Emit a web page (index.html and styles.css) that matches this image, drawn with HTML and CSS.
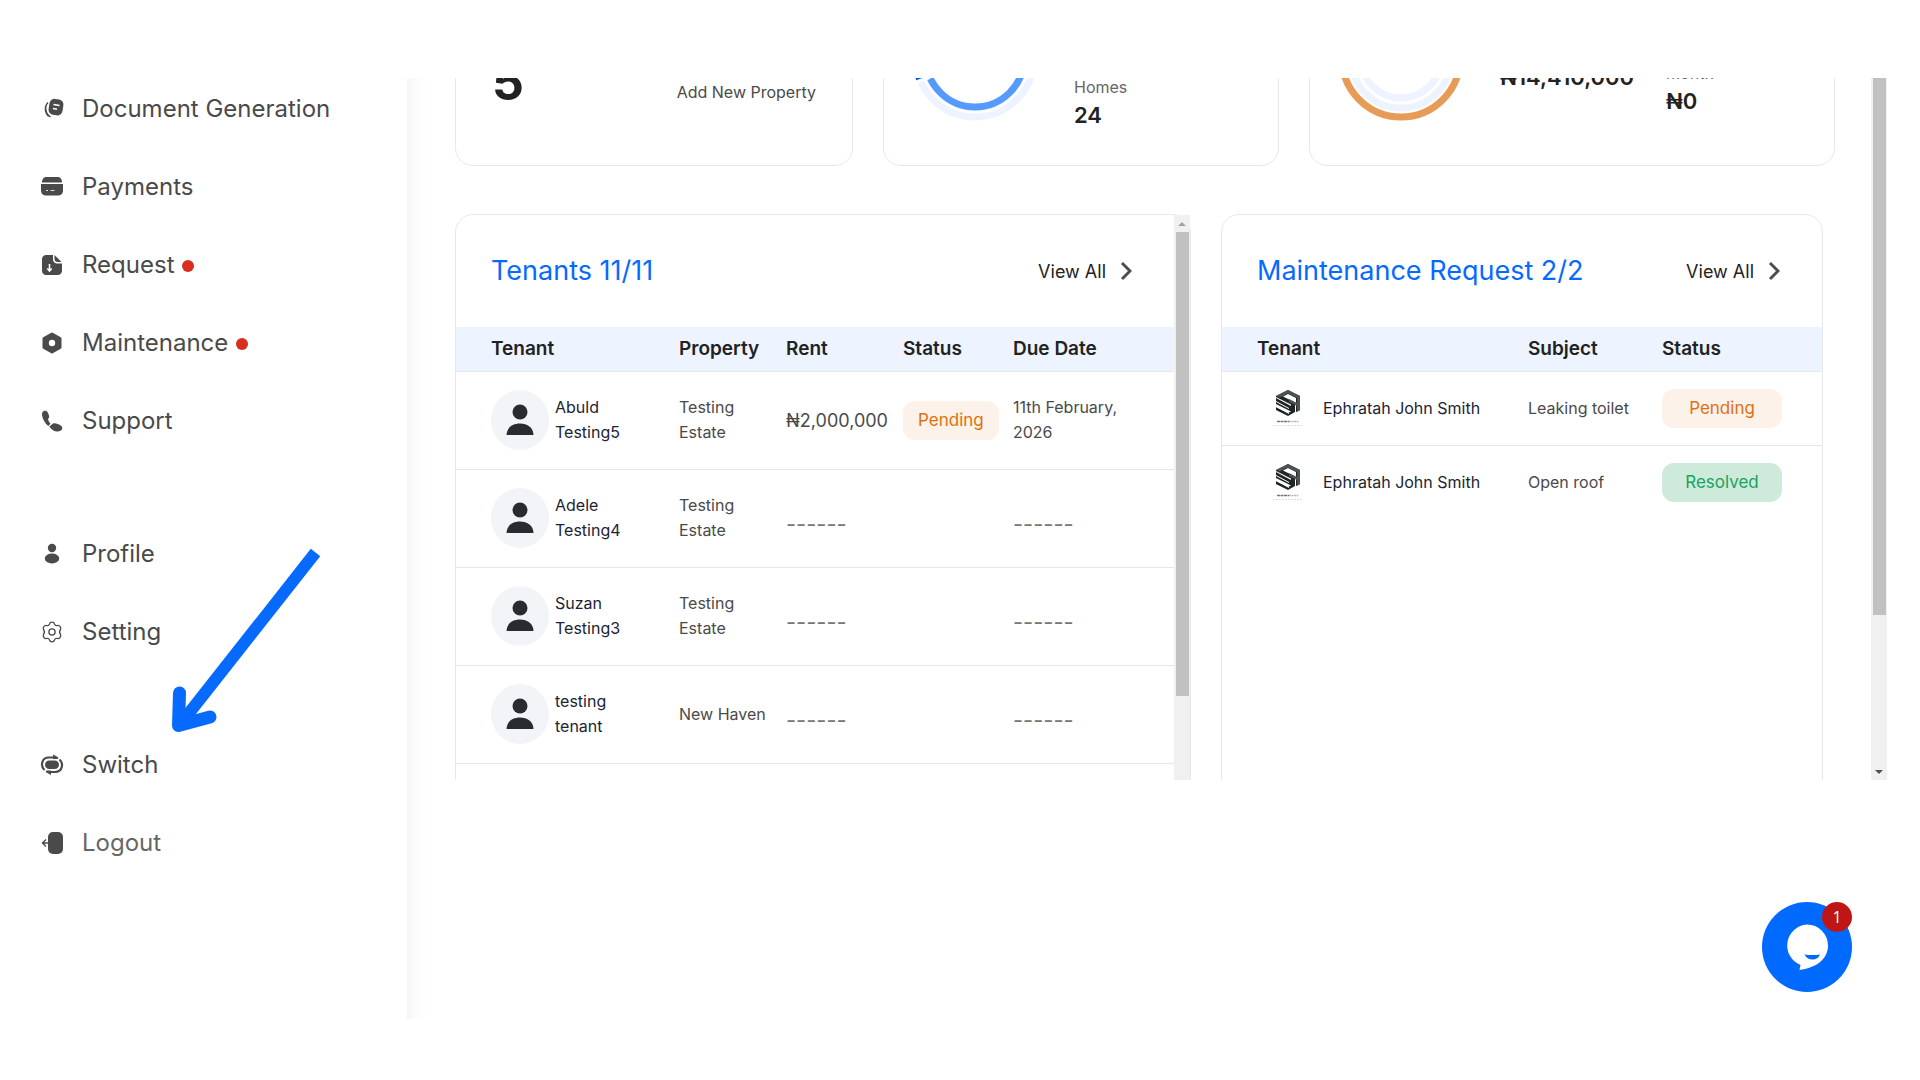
FILE: index.html
```html
<!DOCTYPE html>
<html lang="en">
<head>
<meta charset="utf-8">
<meta name="viewport" content="width=device-width, initial-scale=1">
<title>Property Dashboard</title>
<link rel="stylesheet" href="styles.css">
</head>
<body>
<svg class="defs" aria-hidden="true">
  <symbol id="person" viewBox="0 0 28 32">
    <circle cx="14" cy="8" r="7.5"/>
    <path d="M.5 31C.8 23.500 6.500 19.500 14 19.500S27.200 23.500 27.500 31z"/>
  </symbol>
  <symbol id="chevron" viewBox="0 0 12 20">
    <path d="M2 2l8 8-8 8" fill="none" stroke="#4d4d4d" stroke-width="3"/>
  </symbol>
  <symbol id="logo" viewBox="0 0 32 38">
    <path d="M4 7L16 1l12 6v14l-4 2V9l-8-4-5 2.500 12 6V23L16 27 4 21v-3l12 6 3-1.500L4 15V9l15 8v-1.500L4 8z" fill="#1f2426"/>
    <path d="M4 7L16 1l12 6v14l-3 2v-6l-8-4v-3l8 4V9l-9-4.500-8 4z" fill="#4d5355"/>
    <path d="M4 12.500l13 7M4 17.500l13 7" stroke="#fff" stroke-width="1"/>
    <path d="M5 32.500h12" stroke="#777" stroke-width="1.500" stroke-dasharray="3 .5"/>
    <path d="M17 32.500h10" stroke="#bbb" stroke-width="1.500" stroke-dasharray="2 .5"/>
    <path d="M1 36.500h30" stroke="#ddd" stroke-dasharray="2 1"/>
  </symbol>
</svg>

<div class="page">
  <aside class="sidebar">
    <nav class="nav" aria-label="Main">
      <ul class="nav-group">
        <li><a class="nav-link" href="#documents">
          <svg class="nav-icon" viewBox="0 0 22 22"><rect x="8" y="1" width="14" height="16" rx="5" transform="rotate(9 14 9)"/><path d="M12.500 6.500l6 1M12 10.500l4 .8" stroke="#fff" stroke-width="1.400"/><path d="M7 4.500C3.500 8 4 15 9.500 19M5.500 6.500C3 10 4.500 16 7.500 18.500" fill="none" stroke="#4a4a4a" stroke-width="1.300"/></svg>
          <span>Document Generation</span></a></li>
        <li><a class="nav-link" href="#payments">
          <svg class="nav-icon" viewBox="0 0 22 22"><path d="M1 6.500C1 3 2.500 1 6 1h10c3.500 0 5 2 5 5.500z"/><path d="M0 8h22v6c0 4-2 5.500-5.500 5.500h-11C2 19.500 0 18 0 14z"/><path d="M5 14.500h2M9.500 14.500h4" stroke="#ddd"/></svg>
          <span>Payments</span></a></li>
        <li><a class="nav-link" href="#request">
          <svg class="nav-icon" viewBox="0 0 22 22"><path d="M1 6c0-3.500 1.500-5 5-5h6v3.500C12 8 13.500 9.500 17 9.500h4V16c0 3.500-1.500 5-5 5H6c-3.500 0-5-1.500-5-5z"/><path d="M13.500 1l7 7H17c-2.500 0-3.500-1-3.500-3.500z"/><path d="M8.500 10v6.500M6.300 14.500l2.200 2.500 2.200-2.500" fill="none" stroke="#fff" stroke-width="1.600"/></svg>
          <span>Request</span><i class="dot"></i></a></li>
        <li><a class="nav-link" href="#maintenance">
          <svg class="nav-icon" viewBox="0 0 22 22"><path d="M11 2l8 4.500v9L11 20l-8-4.500v-9z" stroke="#4a4a4a" stroke-width="3" stroke-linejoin="round"/><circle cx="11" cy="11" r="3.200" fill="#fff"/></svg>
          <span>Maintenance</span><i class="dot"></i></a></li>
        <li><a class="nav-link" href="#support">
          <svg class="nav-icon" viewBox="0 0 22 22"><path d="M1 4c0-2 1.500-3.500 3.500-3.200C6.500 1 7 3 8 5.500c.5 1.500 0 2.500-1 3.500.5 2 1 3 2.500 4.500L7.500 16C4 13.500 1 8 1 4zM8.300 16.500l2.500-2c1-1 2.200-1.500 4-1 3 .5 6.500 2.500 6.500 4.500s-2 3.500-5 3.500-6-2-8-5z"/></svg>
          <span>Support</span></a></li>
      </ul>
      <ul class="nav-group">
        <li><a class="nav-link" href="#profile">
          <svg class="nav-icon" viewBox="0 0 22 22"><circle cx="11" cy="5" r="4.200"/><ellipse cx="11" cy="15.500" rx="7.200" ry="5"/></svg>
          <span>Profile</span></a></li>
        <li><a class="nav-link" href="#setting">
          <svg class="nav-icon line" viewBox="0 0 22 22"><circle cx="11" cy="11" r="3.100"/><path d="M8.500 3c.5-2.500 4.500-2.500 5 0 .5 1.500 1.500 2 3 1.500 2-.6 4 2.400 3 4-1 1.300-1 3.700 0 5 1 1.600-1 4.600-3 4-1.500-.5-2.500 0-3 1.500-.5 2.500-4.500 2.500-5 0-.5-1.500-1.500-2-3-1.500-2 .6-4-2.400-3-4 1-1.300 1-3.700 0-5-1-1.600 1-4.600 3-4 1.500.5 2.500 0 3-1.500z"/></svg>
          <span>Setting</span></a></li>
      </ul>
      <ul class="nav-group">
        <li><a class="nav-link" href="#switch">
          <svg class="nav-icon" viewBox="0 0 22 22"><rect x="4" y="6.500" width="14" height="8.500" rx="4.250"/><path d="M3.500 16C-.5 12.500 0 3.500 8 3.500h6M18.500 5.500c4 3.500 3.500 12.500-4.500 12.500H8" fill="none" stroke="#4a4a4a" stroke-width="2.200"/><path d="M12 .5l5.500 3-1 1.500H12zM10 21l-5.500-3 1-1.500H10z"/></svg>
          <span>Switch</span></a></li>
        <li><a class="nav-link light" href="#logout">
          <svg class="nav-icon" viewBox="0 0 22 22"><rect x="7" y="0" width="15" height="22" rx="5"/><path d="M8 11H2M5 7.500L1.500 11 5 14.500" fill="none" stroke="#4a4a4a" stroke-width="1.400"/></svg>
          <span>Logout</span></a></li>
      </ul>
    </nav>
  </aside>

  <main class="viewport">
    <div class="content">
      <section class="stats">
        <article class="card stat-properties">
          <strong class="count">5</strong>
          <a class="add" href="#add-property">Add New Property</a>
        </article>
        <article class="card stat-homes">
          <svg class="ring" viewBox="0 0 126 126" aria-hidden="true">
            <g fill="none" stroke-width="7">
              <circle cx="63" cy="63" r="59" stroke="#edf4ff"/>
              <circle cx="63" cy="63" r="49" stroke="#559bff"/>
              <path d="M7.500 84A59 59 0 0 1 63 4" stroke="#0059d6"/>
            </g>
            <path d="M5 87l13-4" stroke="#fff" stroke-width="2"/>
          </svg>
          <dl class="figure"><dt>Homes</dt><dd>24</dd></dl>
        </article>
        <article class="card stat-rent">
          <svg class="ring" viewBox="0 0 126 126" aria-hidden="true">
            <g fill="none" stroke-width="7">
              <circle cx="63" cy="63" r="59" stroke="#e89b56"/>
              <circle cx="63" cy="63" r="50" stroke="#edf4ff"/>
              <circle cx="63" cy="63" r="40" stroke="#edf4ff"/>
            </g>
          </svg>
          <dl class="figure total"><dt>Total</dt><dd>₦14,410,000</dd></dl>
          <dl class="figure month"><dt>month</dt><dd>₦0</dd></dl>
        </article>
      </section>

      <section class="panels">
        <article class="card panel">
          <div class="panel-body">
            <header class="panel-head">
              <h2>Tenants 11/11</h2>
              <a class="view-all" href="#tenants">View All <svg class="chevron"><use href="#chevron"/></svg></a>
            </header>
            <table class="tenants">
              <colgroup><col class="c-tenant"><col class="c-property"><col class="c-rent"><col class="c-status"><col></colgroup>
              <thead><tr><th>Tenant</th><th>Property</th><th>Rent</th><th>Status</th><th>Due Date</th></tr></thead>
              <tbody>
                <tr><td><div class="who"><span class="avatar"><svg><use href="#person"/></svg></span><span>Abuld<br>Testing5</span></div></td><td>Testing<br>Estate</td><td class="amount">₦2,000,000</td><td><span class="pill pending">Pending</span></td><td>11th February,<br>2026</td></tr>
                <tr><td><div class="who"><span class="avatar"><svg><use href="#person"/></svg></span><span>Adele<br>Testing4</span></div></td><td>Testing<br>Estate</td><td class="none">------</td><td></td><td class="none">------</td></tr>
                <tr><td><div class="who"><span class="avatar"><svg><use href="#person"/></svg></span><span>Suzan<br>Testing3</span></div></td><td>Testing<br>Estate</td><td class="none">------</td><td></td><td class="none">------</td></tr>
                <tr><td><div class="who"><span class="avatar"><svg><use href="#person"/></svg></span><span>testing<br>tenant</span></div></td><td>New Haven</td><td class="none">------</td><td></td><td class="none">------</td></tr>
              </tbody>
            </table>
          </div>
          <div class="track" aria-hidden="true"><i class="arrow-up"></i><i class="thumb"></i></div>
        </article>

        <article class="card panel">
          <div class="panel-body">
            <header class="panel-head">
              <h2>Maintenance Request 2/2</h2>
              <a class="view-all" href="#requests">View All <svg class="chevron"><use href="#chevron"/></svg></a>
            </header>
            <table class="requests">
              <colgroup><col class="c-name"><col class="c-subject"><col></colgroup>
              <thead><tr><th>Tenant</th><th>Subject</th><th>Status</th></tr></thead>
              <tbody>
                <tr><td><div class="who"><svg class="logo"><use href="#logo"/></svg><span>Ephratah John Smith</span></div></td><td>Leaking toilet</td><td><span class="pill pending">Pending</span></td></tr>
                <tr><td><div class="who"><svg class="logo"><use href="#logo"/></svg><span>Ephratah John Smith</span></div></td><td>Open roof</td><td><span class="pill resolved">Resolved</span></td></tr>
              </tbody>
            </table>
          </div>
        </article>
      </section>
    </div>
    <div class="track page-track" aria-hidden="true"><i class="thumb"></i><i class="arrow-down"></i></div>
  </main>
</div>

<svg class="pointer" viewBox="0 0 160 200" aria-hidden="true">
  <g fill="none" stroke="#066aff">
    <path d="M145.500 12.500L12 182" stroke-width="12"/>
    <path d="M9.500 153L8.500 185.500 40 177" stroke-width="13" stroke-linecap="round" stroke-linejoin="round"/>
  </g>
</svg>

<button class="chat" type="button" aria-label="Open chat, 1 new message">
  <svg viewBox="0 0 90 90" aria-hidden="true">
    <path d="M45 22.500a21 21 0 0 1 21 21C66 58 53 66 37.500 68l1-5A21 21 0 0 1 45 22.500z" fill="#fff"/>
    <path d="M42.500 52.500q8 1 15.500 0-2 5-7.500 5t-8-5z" fill="#006aff"/>
  </svg>
  <span class="badge">1</span>
</button>
</body>
</html>
```

FILE: styles.css
```css
* { box-sizing: border-box; }

body {
  margin: 0;
  background: #fff;
  color: #4a4a4a;
  font: 16px/25px Inter, "Noto Sans", sans-serif;
}

a { color: inherit; text-decoration: none; }
ul, dl, dd, h2 { margin: 0; padding: 0; }
ul { list-style: none; }

.defs { position: absolute; width: 0; height: 0; }

.page {
  display: grid;
  grid-template-columns: 407px minmax(0, 1fr);
  min-height: 100vh;
  padding: 78px 33px 61px 0;
}

/* Sidebar, with a soft shade along its right edge */
.sidebar { position: relative; padding: 16px 0 0 41px; }
.sidebar::after {
  content: "";
  position: absolute;
  top: 0;
  bottom: 0;
  left: 100%;
  width: 20px;
  background: linear-gradient(to right, #f6f6f6, #fbfbfb 8px, #fff);
}

.nav { display: flex; flex-direction: column; gap: 103px; }
.nav-group { display: flex; flex-direction: column; gap: 48px; }
.nav-link {
  display: flex;
  align-items: center;
  height: 30px;
  font-size: 24px;
  line-height: 30px;
}
.nav-link.light { color: #666; }
.nav-icon {
  width: 22px;
  height: 22px;
  margin-right: 19px;
  fill: #4a4a4a;
  overflow: visible;
}
.nav-icon.line { fill: none; stroke: #4a4a4a; stroke-width: 1.3; }
.dot {
  width: 12px;
  height: 12px;
  margin: 2px 0 0 8px;
  border-radius: 50%;
  background: #d92d20;
}

/* Scrolling area */
.viewport {
  display: flex;
  height: 65vh;
  overflow: hidden;
}

.content {
  flex: 1;
  min-width: 0;
  margin-top: -128px;
  padding: 0 36px 0 48px;
}

.card {
  border: 1px solid #e7e8ea;
  border-radius: 18px;
}

.stats {
  display: grid;
  grid-template-columns: 398fr 396fr 526fr;
  gap: 30px;
}
.stats .card {
  display: flex;
  align-items: flex-end;
  height: 216px;
  padding: 0 28px 34px;
}
.stats .stat-properties {
  justify-content: space-between;
  padding: 0 36px 60px;
}
.count { color: #222; font-size: 50px; line-height: 46px; }
.add { font-size: 16px; }
.ring { flex: none; width: 126px; height: 126px; margin-bottom: 10px; }
.figure { margin-left: 36px; }
.figure dt { color: #666; font-size: 16px; line-height: 24px; }
.figure dd { color: #222; font-size: 22px; font-weight: 600; line-height: 32px; }
.figure.total { margin-bottom: 38px; }
.figure.month { margin: 0 0 14px 32px; }

/* Panels */
.panels {
  display: grid;
  grid-template-columns: 736fr 602fr;
  gap: 30px;
  margin: 48px 12px 0 0;
}
.panel { display: flex; height: 720px; }
.panel-body { flex: 1; min-width: 0; }
.panel-head {
  display: flex;
  align-items: center;
  justify-content: space-between;
  height: 112px;
  padding: 0 42px 0 35px;
}
.panel-head h2 { color: #066aff; font-size: 27px; font-weight: 400; line-height: 36px; }
.view-all { display: flex; align-items: center; gap: 14px; color: #222; font-size: 18px; }
.chevron { width: 12px; height: 20px; }

table { width: 100%; border-collapse: collapse; table-layout: fixed; }
th {
  height: 44px;
  padding: 0;
  background: #edf4ff;
  color: #222;
  font-size: 19px;
  font-weight: 600;
  text-align: left;
}
td { padding: 0; font-size: 16px; white-space: nowrap; }
tr { border-bottom: 1px solid #e4e7ec; }
th:first-child, td:first-child { padding-left: 35px; }
.requests tbody tr:last-child { border-bottom: 0; }
.tenants td { height: 98px; }
.requests td { height: 74px; }
.c-tenant { width: 223px; }
.c-property { width: 107px; }
.c-rent { width: 117px; }
.c-status { width: 110px; }
.c-name { width: 306px; }
.c-subject { width: 134px; }

.who { display: flex; align-items: center; color: #1c2434; }
.avatar {
  display: flex;
  align-items: center;
  justify-content: center;
  width: 58px;
  height: 60px;
  margin-right: 6px;
  border-radius: 50%;
  background: #f2f4f8;
}
.avatar svg { width: 28px; height: 32px; fill: #282b30; }
.logo { width: 32px; height: 38px; margin: 0 19px 0 15px; }
.tenants .amount { font-size: 18px; }
.tenants .none { padding-top: 12px; color: #777; font-size: 22px; }

.pill {
  display: inline-block;
  padding: 7px 15px;
  border-radius: 12px;
  font-size: 17px;
  text-align: center;
  vertical-align: middle;
}
.requests .pill { width: 120px; }
.pending { background: #fdf2e9; color: #e0700f; }
.resolved { background: #cdeadb; color: #1ba260; }

/* Scrollbars */
.track { flex: none; width: 16px; background: #f0f0f0; }
.thumb { display: block; width: 13px; height: 464px; margin: 0 auto; background: #c1c1c1; }
.arrow-up, .arrow-down {
  display: block;
  width: 8px;
  margin: 7px auto 6px;
  border: 4px solid transparent;
  border-top-width: 0;
  border-bottom-color: #a3a3a3;
}
.page-track { display: flex; flex-direction: column; justify-content: space-between; }
.page-track .thumb { height: 537px; }
.arrow-down { border-width: 4px 4px 0; border-color: #505050 transparent transparent; }

/* Callout arrow over the menu */
.pointer { position: absolute; left: 170px; top: 540px; width: 160px; height: 200px; }

/* Chat launcher */
.chat {
  position: fixed;
  right: 68px;
  bottom: 88px;
  width: 90px;
  height: 90px;
  padding: 0;
  border: 0;
  border-radius: 50%;
  background: #006aff;
}
.chat svg { display: block; }
.badge {
  position: absolute;
  top: 0;
  right: 0;
  width: 30px;
  height: 30px;
  border-radius: 50%;
  background: #c01515;
  color: #fff;
  font: 16px/30px "Noto Sans", sans-serif;
}
```
